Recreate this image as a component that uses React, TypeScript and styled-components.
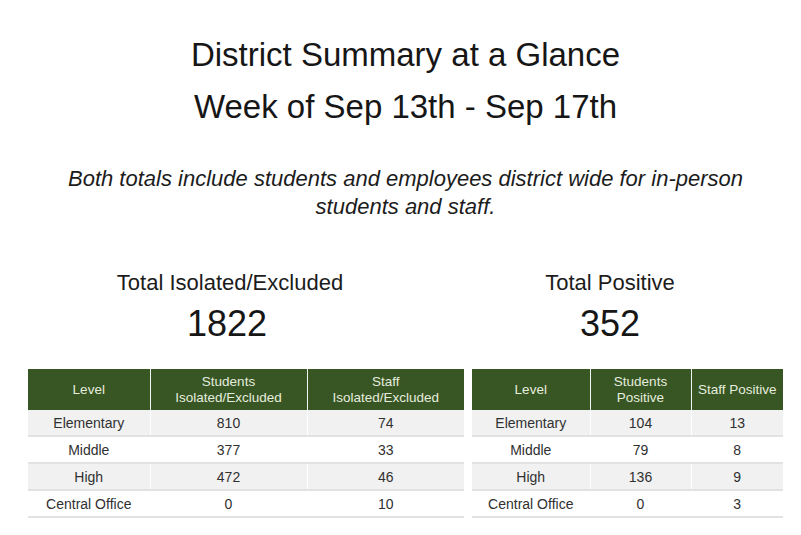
import React from "react";
import styled, { createGlobalStyle } from "styled-components";

const Global = createGlobalStyle`
  html, body { margin: 0; padding: 0; background: #ffffff; }
  body { font-family: "Liberation Sans", Arial, sans-serif; color: #222; }
`;

const Page = styled.div`
  width: 791px;
  padding-left: 10px;
  display: flex;
  flex-direction: column;
  align-items: stretch;
`;

const Title = styled.h1`
  margin: 29px 0 0;
  font-size: 33px;
  line-height: 52px;
  font-weight: 400;
  text-align: center;
  color: #161616;
`;

const Note = styled.p`
  margin: 32px auto 0;
  width: 760px;
  font-size: 22px;
  line-height: 28px;
  font-style: italic;
  text-align: center;
  color: #1c1c1c;
`;

const Totals = styled.div`
  display: grid;
  grid-template-columns: 380px 380px;
  margin: 48px 0 0 30px;
`;

const TotalBlock = styled.div`
  display: flex;
  flex-direction: column;
  align-items: center;
`;

const TotalLabel = styled.div`
  font-size: 22px;
  line-height: 28px;
  color: #1c1c1c;
`;

const TotalValue = styled.div<{ $nudge?: number }>`
  margin-top: 7px;
  margin-left: ${(p) => p.$nudge ?? 0}px;
  font-size: 36px;
  line-height: 40px;
  color: #161616;
`;

const Tables = styled.div`
  display: flex;
  gap: 8px;
  margin: 25px 0 0 18px;
`;

const Table = styled.table<{ $width: number }>`
  width: ${(p) => p.$width}px;
  border-collapse: collapse;
  table-layout: fixed;
  font-size: 14px;
  color: #303030;
`;

const Th = styled.th`
  height: 41px;
  padding: 0 4px;
  background: #375623;
  color: #e6ecdf;
  font-weight: 400;
  font-size: 13.5px;
  line-height: 16px;
  text-align: center;
  vertical-align: middle;
  border-left: 1px solid #f4f4f4;
  &:first-child { border-left: none; }
`;

const Tr = styled.tr<{ $striped?: boolean }>`
  background: ${(p) => (p.$striped ? "#f1f1f1" : "#ffffff")};
  border-bottom: 2px solid #e2e2e2;
`;

const Td = styled.td`
  height: 25px;
  padding: 0 4px;
  text-align: center;
  vertical-align: middle;
  border-left: 1px solid #ffffff;
  &:first-child { border-left: none; }
`;

type Row = [string, number, number];

const isolated: Row[] = [
  ["Elementary", 810, 74],
  ["Middle", 377, 33],
  ["High", 472, 46],
  ["Central Office", 0, 10],
];

const positive: Row[] = [
  ["Elementary", 104, 13],
  ["Middle", 79, 8],
  ["High", 136, 9],
  ["Central Office", 0, 3],
];

function DataTable({
  width,
  cols,
  heads,
  rows,
}: {
  width: number;
  cols: number[];
  heads: React.ReactNode[];
  rows: Row[];
}) {
  return (
    <Table $width={width}>
      <colgroup>
        {cols.map((c, i) => (
          <col key={i} style={{ width: c }} />
        ))}
      </colgroup>
      <thead>
        <tr>
          {heads.map((h, i) => (
            <Th key={i}>{h}</Th>
          ))}
        </tr>
      </thead>
      <tbody>
        {rows.map((r, i) => (
          <Tr key={r[0]} $striped={i % 2 === 0}>
            <Td>{r[0]}</Td>
            <Td>{r[1]}</Td>
            <Td>{r[2]}</Td>
          </Tr>
        ))}
      </tbody>
    </Table>
  );
}

export default function App() {
  return (
    <Page>
      <Global />
      <Title>
        District Summary at a Glance
        <br />
        Week of Sep 13th - Sep 17th
      </Title>
      <Note>
        Both totals include students and employees district wide for in-person
        <br />
        students and staff.
      </Note>
      <Totals>
        <TotalBlock>
          <TotalLabel>Total Isolated/Excluded</TotalLabel>
          <TotalValue $nudge={-6}>1822</TotalValue>
        </TotalBlock>
        <TotalBlock>
          <TotalLabel>Total Positive</TotalLabel>
          <TotalValue>352</TotalValue>
        </TotalBlock>
      </Totals>
      <Tables>
        <DataTable
          width={436}
          cols={[122, 157, 157]}
          heads={[
            "Level",
            <>Students<br />Isolated/Excluded</>,
            <>Staff<br />Isolated/Excluded</>,
          ]}
          rows={isolated}
        />
        <DataTable
          width={311}
          cols={[118, 101, 92]}
          heads={["Level", <>Students<br />Positive</>, "Staff Positive"]}
          rows={positive}
        />
      </Tables>
    </Page>
  );
}
